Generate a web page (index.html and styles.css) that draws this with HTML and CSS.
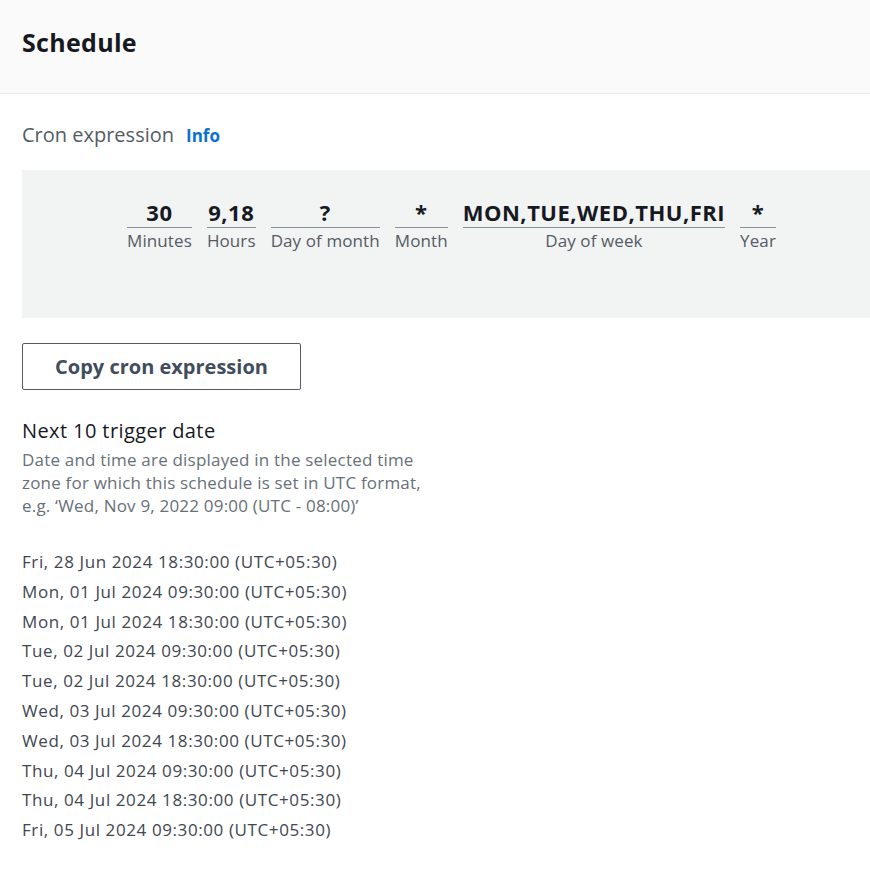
FILE: index.html
```html
<!DOCTYPE html>
<html>
<head>
<meta charset="utf-8">
<link rel="stylesheet" href="styles.css">
</head>
<body>
<div class="page">
  <header class="header">
    <h1 class="title">Schedule</h1>
  </header>
  <section class="content">
    <div class="label-row">
      <span class="label">Cron expression</span>
      <a class="info">Info</a>
    </div>
    <div class="cron-box">
      <div class="fields">
        <div class="field"><div class="value">30</div><div class="name">Minutes</div></div>
        <div class="field"><div class="value">9,18</div><div class="name">Hours</div></div>
        <div class="field"><div class="value">?</div><div class="name">Day of month</div></div>
        <div class="field"><div class="value">*</div><div class="name">Month</div></div>
        <div class="field"><div class="value">MON,TUE,WED,THU,FRI</div><div class="name">Day of week</div></div>
        <div class="field"><div class="value">*</div><div class="name">Year</div></div>
      </div>
    </div>
    <button class="btn">Copy cron expression</button>
    <h2 class="sub">Next 10 trigger date</h2>
    <p class="desc">Date and time are displayed in the selected time zone for which this schedule is set in UTC format, e.g. ‘Wed, Nov 9, 2022 09:00 (UTC - 08:00)’</p>
    <ul class="dates">
      <li>Fri, 28 Jun 2024 18:30:00 (UTC+05:30)</li>
      <li>Mon, 01 Jul 2024 09:30:00 (UTC+05:30)</li>
      <li>Mon, 01 Jul 2024 18:30:00 (UTC+05:30)</li>
      <li>Tue, 02 Jul 2024 09:30:00 (UTC+05:30)</li>
      <li>Tue, 02 Jul 2024 18:30:00 (UTC+05:30)</li>
      <li>Wed, 03 Jul 2024 09:30:00 (UTC+05:30)</li>
      <li>Wed, 03 Jul 2024 18:30:00 (UTC+05:30)</li>
      <li>Thu, 04 Jul 2024 09:30:00 (UTC+05:30)</li>
      <li>Thu, 04 Jul 2024 18:30:00 (UTC+05:30)</li>
      <li>Fri, 05 Jul 2024 09:30:00 (UTC+05:30)</li>
    </ul>
  </section>
</div>
</body>
</html>
```
FILE: styles.css
```css
* { box-sizing: border-box; }
html, body { margin: 0; padding: 0; background: #ffffff; }
body {
  font-family: "Open Sans", "Noto Sans", sans-serif;
  color: #16191f;
  width: 870px;
  overflow: hidden;
}
.header {
  background: #fafafa;
  border-bottom: 1px solid #e9ebed;
  height: 94px;
  padding: 0 22px 10px 22px;
  display: flex;
  align-items: center;
}
.title {
  margin: 0;
  font-size: 25px;
  font-weight: 700;
  color: #16191f;
  letter-spacing: 0.3px;
}
.content {
  padding: 27px 0 0 22px;
}
.label-row {
  display: flex;
  align-items: baseline;
  gap: 12px;
  height: 23px;
}
.label {
  font-size: 20px;
  color: #545b64;
}
.info {
  font-size: 17px;
  font-weight: 700;
  color: #0972d3;
}
.cron-box {
  margin-top: 26px;
  background: #f2f3f3;
  height: 148px;
  padding-top: 27px;
}
.fields {
  display: flex;
  justify-content: center;
  gap: 15px;
  padding-left: 11px;
}
.field {
  display: flex;
  flex-direction: column;
  align-items: stretch;
  text-align: center;
}
.value {
  font-size: 22px;
  font-weight: 700;
  color: #16191f;
  line-height: 30px;
  border-bottom: 1px solid #879596;
  letter-spacing: 0.5px;
}
.name {
  font-size: 17px;
  color: #545b64;
  line-height: 25px;
  letter-spacing: 0.1px;
}
.btn {
  margin-top: 25px;
  display: block;
  width: 279px;
  height: 47px;
  background: #ffffff;
  border: 1px solid #545b64;
  border-radius: 2px;
  font-family: inherit;
  font-size: 20px;
  font-weight: 700;
  color: #414d5c;
}
.sub {
  margin: 28px 0 0 0;
  font-size: 20px;
  font-weight: 400;
  color: #16191f;
  line-height: 26px;
  letter-spacing: 0.4px;
}
.desc {
  margin: 4px 0 0 0;
  width: 420px;
  font-size: 17px;
  line-height: 23px;
  color: #687078;
  letter-spacing: 0.2px;
}
.dates {
  list-style: none;
  margin: 30px 0 0 0;
  padding: 0;
}
.dates li {
  font-size: 17px;
  line-height: 29.8px;
  color: #414750;
  letter-spacing: 0.6px;
}
```
